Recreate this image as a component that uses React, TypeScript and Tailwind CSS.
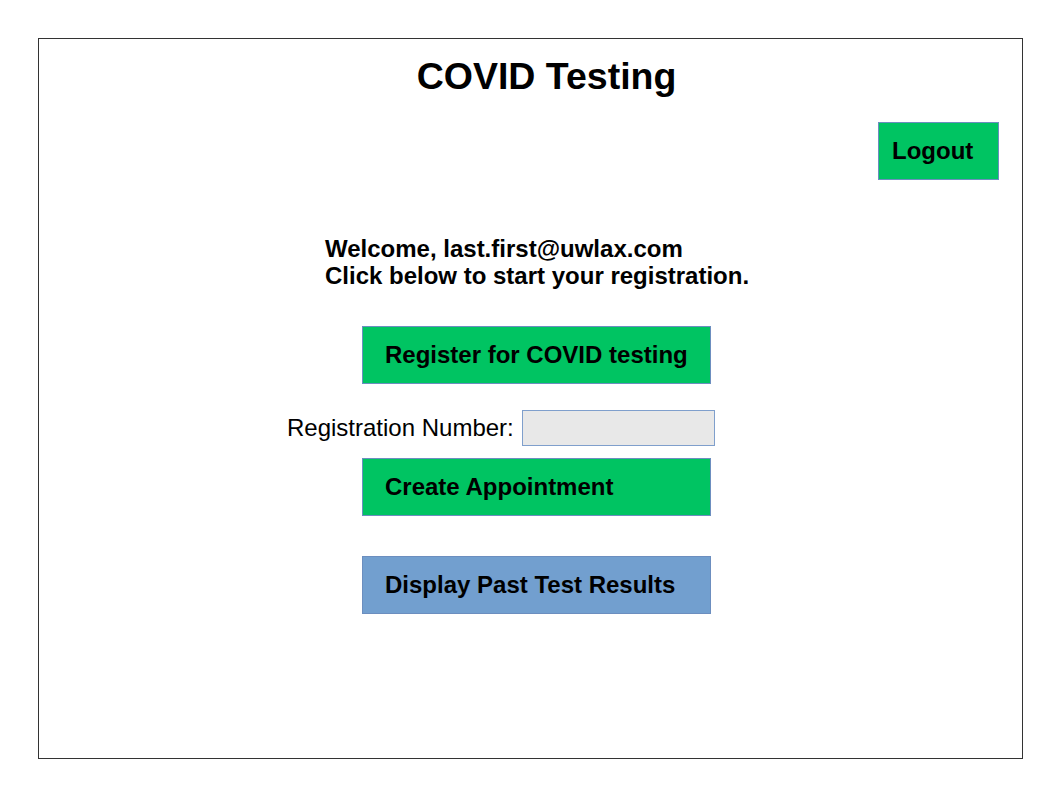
export default function App() {
  const font = { fontFamily: '"Liberation Sans", Arial, sans-serif' };
  return (
    <div className="w-[1058px] h-[794px] bg-white pt-[38px] pl-[38px]" style={font}>
      <div className="w-[985px] h-[721px] border border-[#333333] flex flex-col text-black">
        <div className="mt-[17px] pl-[32px] flex justify-center">
          <h1 className="text-[37.5px] leading-[40px] font-bold">COVID Testing</h1>
        </div>
        <div className="mt-[26px] flex justify-end pr-[23px]">
          <button className="w-[121px] h-[58px] bg-[#00c462] border border-[#6c8ebf] flex items-center pl-[13px] text-[24px] font-bold leading-none">
            Logout
          </button>
        </div>
        <div className="mt-[55px] ml-[286px] text-[24px] leading-[27px] font-bold">
          <div>Welcome, last.first@uwlax.com</div>
          <div>Click below to start your registration.</div>
        </div>
        <div className="mt-[37px] ml-[323px]">
          <button className="w-[349px] h-[58px] bg-[#00c462] border border-[#6c8ebf] flex items-center pl-[22px] text-[24px] font-bold leading-none">
            Register for COVID testing
          </button>
        </div>
        <div className="mt-[26px] ml-[248px] flex items-center h-[36px]">
          <label className="text-[24px] leading-[36px]">Registration Number:</label>
          <input className="ml-[8px] w-[193px] h-[36px] bg-[#e8e8e8] border border-[#7f9fcc] outline-none" />
        </div>
        <div className="mt-[12px] ml-[323px]">
          <button className="w-[349px] h-[58px] bg-[#00c462] border border-[#6c8ebf] flex items-center pl-[22px] text-[24px] font-bold leading-none">
            Create Appointment
          </button>
        </div>
        <div className="mt-[40px] ml-[323px]">
          <button className="w-[349px] h-[58px] bg-[#729fcf] border border-[#6c8ebf] flex items-center pl-[22px] text-[24px] font-bold leading-none">
            Display Past Test Results
          </button>
        </div>
      </div>
    </div>
  );
}
